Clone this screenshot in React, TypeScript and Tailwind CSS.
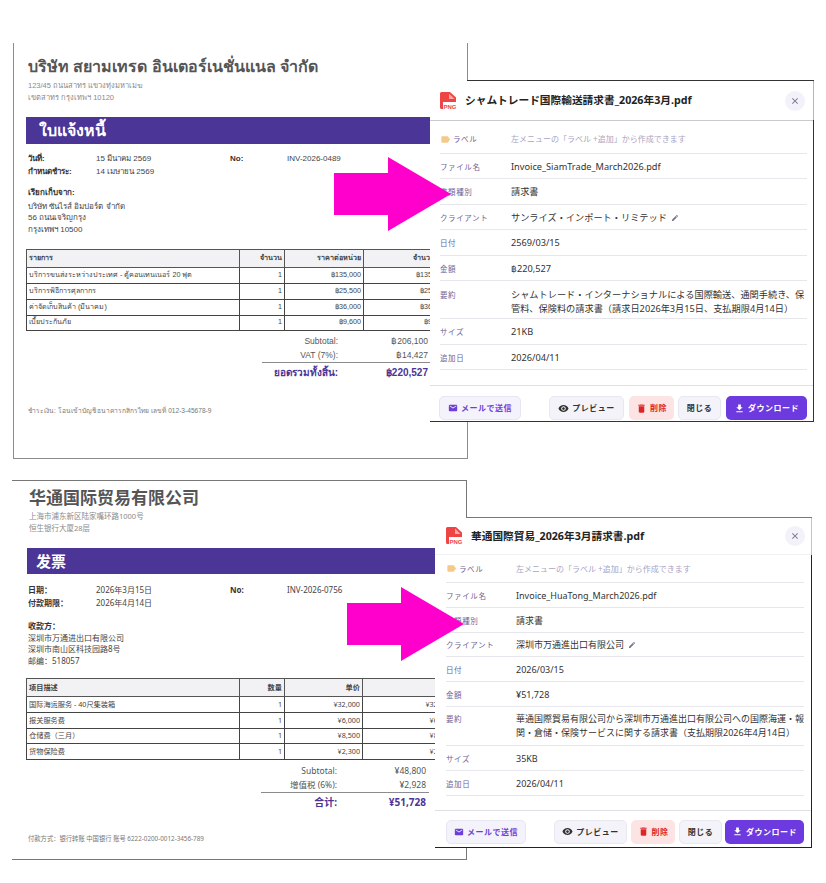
import React from "react";
import { MdClose, MdDelete, MdEdit, MdEmail, MdFileDownload, MdLabel, MdVisibility } from "react-icons/md";

type InvoiceData = {
  frame: string;
  font: string;
  company: string;
  address: string[];
  docTitle: string;
  titleClass: string;
  headClass: string;
  metaLabels: string[];
  metaValues: string[];
  no: string;
  billLabel: string;
  bill: string[];
  headers: string[];
  rows: string[][];
  rowClasses: string[];
  totals: string[][];
  grand: string[];
  footer: string;
  colWidths: string[];
  barClass: string;
  metaClass: string;
  billClass: string;
  billLabelClass: string;
  tableClass: string;
  totalsClass: string;
  totalValue: string;
  grandClass: string;
  footerClass: string;
};

const thai: InvoiceData = {
  frame: "left-[13px] top-[43px] h-[416px] w-[455px] border-x border-b border-[#8c8c8c] pl-[12px] pt-[11px]",
  font: "font-['Liberation_Sans','Noto_Sans_CJK_SC',sans-serif]",
  company: "บริษัท สยามเทรด อินเตอร์เนชั่นแนล จำกัด",
  address: ["123/45 ถนนสาทร แขวงทุ่งมหาเมฆ", "เขตสาทร กรุงเทพฯ 10120"],
  docTitle: "ใบแจ้งหนี้",
  titleClass: "h-[20px] text-[16px] leading-[20px]",
  headClass: "pl-[2px] mt-[3px]",
  metaLabels: ["วันที่:", "กำหนดชำระ:"],
  metaValues: ["15 มีนาคม 2569", "14 เมษายน 2569"],
  no: "INV-2026-0489",
  billLabel: "เรียกเก็บจาก:",
  bill: ["บริษัท ซันไรส์ อิมปอร์ต จำกัด", "56 ถนนเจริญกรุง", "กรุงเทพฯ 10500"],
  headers: ["รายการ", "จำนวน", "ราคาต่อหน่วย", "จำนวนเงิน"],
  rows: [
    ["บริการขนส่งระหว่างประเทศ - ตู้คอนเทนเนอร์ 20 ฟุต", "1", "฿135,000", "฿135,000"],
    ["บริการพิธีการศุลกากร", "1", "฿25,500", "฿25,500"],
    ["ค่าจัดเก็บสินค้า (มีนาคม)", "1", "฿36,000", "฿36,000"],
    ["เบี้ยประกันภัย", "1", "฿9,600", "฿9,600"],
  ],
  rowClasses: ["h-[16px]", "h-[16px]", "h-[15.5px]", "h-[15.5px]"],
  totals: [["Subtotal:", "฿206,100"], ["VAT (7%):", "฿14,427"]],
  grand: ["ยอดรวมทั้งสิ้น:", "฿220,527"],
  footer: "ชำระเงิน: โอนเข้าบัญชี ธนาคารกสิกรไทย เลขที่ 012-3-45678-9",
  colWidths: ["w-[213px]", "w-[45px]", "w-[79px]", "w-[85px]"],
  barClass: "mt-[14px] h-[27px] w-[410px] pl-[13px] text-[16px] leading-[27px]",
  metaClass: "mt-[8px]",
  billClass: "mt-[9px]",
  billLabelClass: "mb-[2px]",
  tableClass: "mt-[14px] w-[422px]",
  totalsClass: "mt-[2.5px] w-[404px]",
  totalValue: "w-[92px] pr-[2px]",
  grandClass: "ml-[236px] h-[22px]",
  footerClass: "mt-[22px] text-[6.6px]",
};

const chinese: InvoiceData = {
  frame: "left-[12px] top-[480px] h-[380px] w-[455px] border-t border-r border-b border-[#777] pl-[14px]",
  font: "font-['Noto_Sans','Noto_Sans_CJK_SC',sans-serif]",
  company: "华通国际贸易有限公司",
  address: ["上海市浦东新区陆家嘴环路1000号", "恒生银行大厦28层"],
  docTitle: "发票",
  titleClass: "mt-[6px] h-[22px] text-[17px] leading-[22px]",
  headClass: "pl-[3px] mt-[2px]",
  metaLabels: ["日期：", "付款期限："],
  metaValues: ["2026年3月15日", "2026年4月14日"],
  no: "INV-2026-0756",
  billLabel: "收款方：",
  bill: ["深圳市万通进出口有限公司", "深圳市南山区科技园路8号", "邮编：518057"],
  headers: ["项目描述", "数量", "单价", "金额"],
  rows: [
    ["国际海运服务 - 40尺集装箱", "1", "¥32,000", "¥32,000"],
    ["报关服务费", "1", "¥6,000", "¥6,000"],
    ["仓储费（三月）", "1", "¥8,500", "¥8,500"],
    ["货物保险费", "1", "¥2,300", "¥2,300"],
  ],
  rowClasses: ["h-[15.5px]", "h-[16px]", "h-[15.5px]", "h-[15.5px]"],
  totals: [["Subtotal:", "¥48,800"], ["增值税 (6%):", "¥2,928"]],
  grand: ["合计:", "¥51,728"],
  footer: "付款方式：银行转账 中国银行 账号 6222-0200-0012-3456-789",
  colWidths: ["w-[213px]", "w-[45px]", "w-[78px]", "w-[92px]"],
  barClass: "mt-[14px] ml-[1px] h-[26px] w-[408px] pl-[9px] text-[15px] leading-[26px]",
  metaClass: "mt-[9px]",
  billClass: "mt-[11px]",
  billLabelClass: "",
  tableClass: "mt-[12px] w-[428px]",
  totalsClass: "mt-[4px] w-[403px]",
  totalValue: "w-[92px] pr-[3px]",
  grandClass: "ml-[235px] h-[19px]",
  footerClass: "mt-[23.5px] text-[6.3px]",
};

function Invoice({ d }: { d: InvoiceData }) {
  return (
    <div className={`absolute overflow-hidden bg-white ${d.frame} ${d.font}`}>
      <div className={`font-bold whitespace-nowrap text-[#555] ${d.titleClass} ${d.headClass}`}>{d.company}</div>
      <div className={`text-[7.5px] leading-[11.5px] text-[#8a8a8a] ${d.headClass}`}>
        {d.address.map((a) => (
          <div key={a}>{a}</div>
        ))}
      </div>
      <div className={`bg-[#4b3596] font-bold text-white ${d.barClass}`}>{d.docTitle}</div>
      <div className={`grid grid-cols-[68px_134px_57px_1fr] pl-[2px] text-[8px] leading-[13px] text-[#444] ${d.metaClass}`}>
        <div className="font-bold text-[#333]">{d.metaLabels[0]}</div>
        <div>{d.metaValues[0]}</div>
        <div className="font-bold text-[#333]">No:</div>
        <div>{d.no}</div>
        <div className="font-bold text-[#333]">{d.metaLabels[1]}</div>
        <div>{d.metaValues[1]}</div>
      </div>
      <div className={`pl-[2px] text-[8px] leading-[11.5px] text-[#444] ${d.billClass}`}>
        <div className={`font-bold text-[#333] ${d.billLabelClass}`}>{d.billLabel}</div>
        {d.bill.map((b) => (
          <div key={b}>{b}</div>
        ))}
      </div>
      <table className={`table-fixed border-collapse text-[7.2px] text-[#444] ${d.tableClass}`}>
        <colgroup>
          {d.colWidths.map((w, i) => (
            <col key={i} className={w} />
          ))}
        </colgroup>
        <thead>
          <tr className="h-[18px] bg-[#f2f2f5]">
            {d.headers.map((h, i) => (
              <th
                key={h}
                className={`border border-[#555] px-[2px] py-0 font-bold text-[#444] ${i === 0 ? "text-left" : "text-right"}`}
              >
                {h}
              </th>
            ))}
          </tr>
        </thead>
        <tbody>
          {d.rows.map((r, i) => (
            <tr key={r[0]} className={d.rowClasses[i]}>
              {r.map((c, j) => (
                <td
                  key={j}
                  className={`overflow-hidden whitespace-nowrap border border-[#444] px-[2px] py-0 ${j === 0 ? "text-left" : "text-right"}`}
                >
                  {c}
                </td>
              ))}
            </tr>
          ))}
        </tbody>
      </table>
      <div className={`text-[8.5px] leading-[14px] text-[#555] ${d.totalsClass}`}>
        {d.totals.map((t) => (
          <div key={t[0]} className="flex justify-end">
            <span>{t[0]}</span>
            <span className={`text-right ${d.totalValue}`}>{t[1]}</span>
          </div>
        ))}
        <div className={`flex items-center justify-end border-t border-[#8c8c8c] text-[10px] font-bold text-[#4b3596] ${d.grandClass}`}>
          <span>{d.grand[0]}</span>
          <span className={`text-right ${d.totalValue}`}>{d.grand[1]}</span>
        </div>
      </div>
      <div className={`pl-[2px] leading-[10px] text-[#777] ${d.footerClass}`}>{d.footer}</div>
    </div>
  );
}

function PngIcon() {
  return (
    <svg viewBox="0 0 18 18" className="h-[18px] w-[18px] shrink-0">
      <path d="M1 1.500A1.500 1.500 0 0 1 2.500 0H11l6 5.500V10H4v7H2.500A1.500 1.500 0 0 1 1 15.500Z" fill="#ef4444" />
      <path d="M10 1.500 15.500 7H10Z" fill="#fca5a5" />
      <text x="4.500" y="16.800" fontSize="6" fontWeight="700" fill="#ef4444" fontFamily="Liberation Sans">
        PNG
      </text>
    </svg>
  );
}

type PanelData = {
  wrap: string;
  title: string;
  header: string;
  headerEdge: string;
  rows: string;
  fileName: string;
  client: string;
  date: string;
  amount: string;
  summary: string;
  size: string;
  footer: string;
  labelCol: string;
  valueCol: string;
  firstRow: string;
  row: string;
  tallRow: string;
  buttons: string[];
};

const panelA: PanelData = {
  wrap: "left-[430px] top-[81px] h-[341px] w-[384px] border-r border-b border-[#333]",
  title: "シャムトレード国際輸送請求書_2026年3月.pdf",
  header: "h-[40px] border-[#c9c9ce] pl-[9px] pr-[8px]",
  headerEdge: "h-[39px] bg-[#b5b5b8]",
  rows: "mx-[10px] w-[367px]",
  fileName: "Invoice_SiamTrade_March2026.pdf",
  client: "サンライズ・インポート・リミテッド",
  date: "2569/03/15",
  amount: "฿220,527",
  summary: "シャムトレード・インターナショナルによる国際輸送、通関手続き、保管料、保険料の請求書（請求日2026年3月15日、支払期限4月14日）",
  size: "21KB",
  footer: "mt-[15px] h-[36px] px-[9px] pt-[10px]",
  labelCol: "w-[71px]",
  valueCol: "text-[9.2px]",
  firstRow: "h-[32.5px] pt-[5px] items-center",
  row: "h-[25.5px] pt-[2px] items-center",
  tallRow: "h-[38px] pt-[7px] items-start",
  buttons: ["w-[82px]", "ml-[28px] w-[75px]", "ml-[5px] w-[45px]", "ml-[4px] w-[43px]", "ml-[5px] w-[81px]"],
};

const panelB: PanelData = {
  wrap: "left-[435px] top-[518px] h-[330px] w-[377px] border-r border-b border-[#222]",
  title: "華通国際貿易_2026年3月請求書.pdf",
  header: "h-[37px] border-[#f1f1f4] pl-[10px] pr-[6px]",
  headerEdge: "h-[37px] bg-[#c4c4c8]",
  rows: "mx-[11px] w-[358px]",
  fileName: "Invoice_HuaTong_March2026.pdf",
  client: "深圳市万通進出口有限公司",
  date: "2026/03/15",
  amount: "¥51,728",
  summary: "華通国際貿易有限公司から深圳市万通進出口有限公司への国際海運・報関・倉储・保険サービスに関する請求書（支払期限2026年4月14日）",
  size: "35KB",
  footer: "mt-[14px] h-[37px] px-[11px] pt-[9px]",
  labelCol: "w-[70px]",
  valueCol: "text-[9px]",
  firstRow: "h-[28px] items-center",
  row: "h-[24.8px] pt-[2px] items-center",
  tallRow: "h-[39px] pt-[5px] items-start",
  buttons: ["w-[80px]", "ml-[28px] w-[73px]", "ml-[4px] w-[44px]", "ml-[4px] w-[43px]", "ml-[3px] w-[79px]"],
};

function Row({ label, cls, lcol, vcol, children }: { label: React.ReactNode; cls: string; lcol: string; vcol: string; children: React.ReactNode }) {
  return (
    <div className={`flex border-b border-[#e6e6ec] ${cls}`}>
      <div className={`shrink-0 whitespace-nowrap text-[7.5px] leading-[14px] tracking-[0.6px] text-[#6f6396] ${lcol}`}>{label}</div>
      <div className={`min-w-0 flex-1 leading-[14px] text-[#333] ${vcol}`}>{children}</div>
    </div>
  );
}

function Panel({ p }: { p: PanelData }) {
  const btn = "flex h-[24px] shrink-0 items-center justify-center gap-[3px] whitespace-nowrap rounded-[5px] text-[8px] font-bold tracking-[0.5px]";
  const rowProps = { lcol: p.labelCol, vcol: p.valueCol };
  return (
    <div className={`absolute bg-white font-['Noto_Sans','Noto_Sans_CJK_JP',sans-serif] ${p.wrap}`}>
      <div className={`absolute right-[-1px] top-0 w-px ${p.headerEdge}`} />
      <div className={`flex items-center border-b ${p.header}`}>
        <PngIcon />
        <div className="ml-[8px] flex-1 whitespace-nowrap text-[10.7px] font-bold text-[#222]">{p.title}</div>
        <div className="flex h-[20px] w-[20px] items-center justify-center rounded-full bg-[#f3f1f9] text-[#6f6a88]">
          <MdClose size={10} />
        </div>
      </div>
      <div className={p.rows}>
        <Row
          cls={p.firstRow}
          {...rowProps}
          label={
            <span className="flex items-center gap-[2px]">
              <MdLabel size={11} className="text-[#f5c98a]" />
              ラベル
            </span>
          }
        >
          <span className="text-[8px] text-[#a9a5c2]">左メニューの「ラベル +追加」から作成できます</span>
        </Row>
        <Row cls={p.row} {...rowProps} label="ファイル名">{p.fileName}</Row>
        <Row cls={p.row} {...rowProps} label="書類種別">請求書</Row>
        <Row cls={p.row} {...rowProps} label="クライアント">
          <span className="flex items-center gap-[4px]">
            {p.client}
            <MdEdit size={8} className="text-[#77728f]" />
          </span>
        </Row>
        <Row cls={p.row} {...rowProps} label="日付">{p.date}</Row>
        <Row cls={p.row} {...rowProps} label="金額">{p.amount}</Row>
        <Row cls={p.tallRow} {...rowProps} label="要約">{p.summary}</Row>
        <Row cls={p.row} {...rowProps} label="サイズ">{p.size}</Row>
        <Row cls={p.row} {...rowProps} label="追加日">2026/04/11</Row>
      </div>
      <div className={`flex border-t border-[#dfdfe4] ${p.footer}`}>
        <button className={`${btn} border border-[#e8e6f3] bg-[#f4f2fb] text-[#6d3fd8] ${p.buttons[0]}`}>
          <MdEmail size={10} />
          メールで送信
        </button>
        <button className={`${btn} border border-[#e9e8f1] bg-[#f4f3f9] text-[#333] ${p.buttons[1]}`}>
          <MdVisibility size={11} />
          プレビュー
        </button>
        <button className={`${btn} bg-[#fde4e4] text-[#dc2626] ${p.buttons[2]}`}>
          <MdDelete size={11} />
          削除
        </button>
        <button className={`${btn} border border-[#e9e8f1] bg-[#f4f3f9] text-[#333] ${p.buttons[3]}`}>閉じる</button>
        <button className={`${btn} bg-[#6d3ae0] text-white ${p.buttons[4]}`}>
          <MdFileDownload size={11} />
          ダウンロード
        </button>
      </div>
    </div>
  );
}

function Arrow({ cls }: { cls: string }) {
  return (
    <svg viewBox="0 0 117 74" className={`absolute ${cls}`}>
      <polygon points="0,16 54,16 54,0 117,37 54,74 54,58 0,58" fill="#ff00cc" />
    </svg>
  );
}

export default function App() {
  return (
    <div className="relative h-[883px] w-[826px] overflow-hidden bg-white">
      <Invoice d={thai} />
      <Invoice d={chinese} />
      <div className="absolute left-[467px] top-[80px] h-px w-[347px] bg-[#333]" />
      <div className="absolute left-[466px] top-[517px] h-px w-[346px] bg-[#777]" />
      <Panel p={panelA} />
      <Panel p={panelB} />
      <Arrow cls="left-[334px] top-[157px] h-[74px] w-[117px]" />
      <Arrow cls="left-[347px] top-[587px] h-[74px] w-[117px]" />
    </div>
  );
}
